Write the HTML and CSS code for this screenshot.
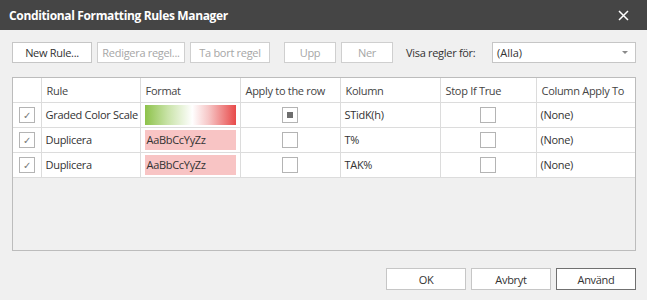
FILE: index.html
```html
<!DOCTYPE html>
<html lang="sv">
<head>
	<meta charset="UTF-8">
	<meta name="viewport" content="width=device-width,initial-scale=1.0">
	<title>Conditional Formatting Rules Manager</title>
	<link rel="stylesheet" href="styles.css">
</head>
<body>
	<div class="dialog">
		<div class="title-bar">
			<span class="title">Conditional Formatting Rules Manager</span>
			<span class="close">
				<svg width="11" height="11" viewBox="0 0 11 11"><path d="M1 1L10 10M10 1L1 10" stroke="#fff" stroke-width="1.5"/></svg>
			</span>
		</div>
		<div class="content">
			<div class="toolbar">
				<button type="button" class="btn btn-new">New Rule...</button>
				<button type="button" class="btn btn-edit" disabled>Redigera regel...</button>
				<button type="button" class="btn btn-delete" disabled>Ta bort regel</button>
				<button type="button" class="btn btn-up" disabled>Upp</button>
				<button type="button" class="btn btn-down" disabled>Ner</button>
				<label class="show-label">Visa regler för:</label>
				<div class="combo">
					<span>(Alla)</span>
					<span class="arrow"></span>
				</div>
			</div>
			<!-- regellista -->
			<div class="grid">
				<table>
					<colgroup>
						<col class="col-check">
						<col class="col-rule">
						<col class="col-format">
						<col class="col-row">
						<col class="col-kolumn">
						<col class="col-stop">
						<col>
					</colgroup>
					<thead>
						<tr>
							<th></th>
							<th>Rule</th>
							<th>Format</th>
							<th>Apply to the row</th>
							<th>Kolumn</th>
							<th>Stop If True</th>
							<th>Column Apply To</th>
						</tr>
					</thead>
					<tbody>
						<tr>
							<td class="center"><span class="check checked">&#10003;</span></td>
							<td>Graded Color Scale</td>
							<td><div class="swatch gradient"></div></td>
							<td class="center"><span class="check partial"><i></i></span></td>
							<td>STidK(h)</td>
							<td class="center"><span class="check"></span></td>
							<td>(None)</td>
						</tr>
						<tr>
							<td class="center"><span class="check checked">&#10003;</span></td>
							<td>Duplicera</td>
							<td><div class="swatch pink">AaBbCcYyZz</div></td>
							<td class="center"><span class="check"></span></td>
							<td>T%</td>
							<td class="center"><span class="check"></span></td>
							<td>(None)</td>
						</tr>
						<tr>
							<td class="center"><span class="check checked">&#10003;</span></td>
							<td>Duplicera</td>
							<td><div class="swatch pink">AaBbCcYyZz</div></td>
							<td class="center"><span class="check"></span></td>
							<td>TAK%</td>
							<td class="center"><span class="check"></span></td>
							<td>(None)</td>
						</tr>
					</tbody>
				</table>
			</div>
			<div class="footer">
				<button type="button" class="btn btn-foot">OK</button>
				<button type="button" class="btn btn-foot">Avbryt</button>
				<button type="button" class="btn btn-foot btn-default">Använd</button>
			</div>
		</div>
	</div>
</body>
</html>
```

FILE: styles.css
```css
body{
	margin: 0;
	background-color: #f0f0f0;
	font-family: "Open Sans", "Noto Sans", sans-serif;
	font-size: 11px;
	color: #333;
}
.dialog{
	width: 647px;
	height: 300px;
}
.title-bar{
	height: 30px;
	background-color: #454545;
	color: #fff;
	display: flex;
	align-items: center;
	justify-content: space-between;
	padding: 0 18px 0 9px;
}
.title{
	font-weight: bold;
	font-size: 12px;
	letter-spacing: -0.35px;
}
.close{
	display: flex;
}
.content{
	padding: 12px 11px 0 12px;
}
.toolbar{
	display: flex;
	align-items: center;
	height: 21px;
}
.btn{
	height: 21px;
	padding: 0;
	border: 1px solid #c6c6c6;
	background-color: #fff;
	color: #333;
	font-family: inherit;
	font-size: 11px;
	letter-spacing: -0.3px;
}
.btn:disabled{
	color: #a6a6a6;
	border-color: #cfcfcf;
}
.btn-new{ width: 80px; }
.btn-edit{ width: 88px; margin-left: 5px; }
.btn-delete{ width: 80px; margin-left: 5px; }
.btn-up{ width: 52px; margin-left: 14px; }
.btn-down{ width: 52px; margin-left: 5px; }
.show-label{
	margin-left: 13px;
	width: 86px;
	letter-spacing: -0.3px;
}
.combo{
	flex: 1;
	height: 19px;
	border: 1px solid #c6c6c6;
	background-color: #fff;
	display: flex;
	align-items: center;
	justify-content: space-between;
	padding: 0 7px 0 4px;
}
.arrow{
	width: 0;
	height: 0;
	border-left: 3px solid transparent;
	border-right: 3px solid transparent;
	border-top: 3px solid #8a8a8a;
}
.grid{
	margin-top: 14px;
	height: 172px;
	border: 1px solid #bcbcbc;
	background-color: #f0f0f0;
}
table{
	border-collapse: collapse;
	width: 100%;
	table-layout: fixed;
}
.col-check{ width: 28px; }
.col-rule{ width: 99px; }
.col-format{ width: 100px; }
.col-row{ width: 100px; }
.col-kolumn{ width: 100px; }
.col-stop{ width: 96px; }
th, td{
	box-sizing: border-box;
	height: 25px;
	padding: 0 0 0 4px;
	border-right: 1px solid #dcdcdc;
	border-bottom: 1px solid #dcdcdc;
	background-color: #fff;
	text-align: left;
	font-weight: normal;
	white-space: nowrap;
	overflow: hidden;
	letter-spacing: -0.3px;
}
th:last-child, td:last-child{
	border-right: none;
}
th{
	height: 24px;
	padding-left: 5px;
	padding-top: 1px;
	color: #444;
}
td{
	color: #333;
}
.center{
	text-align: center;
	padding: 0;
}
.check{
	display: inline-block;
	width: 14px;
	height: 14px;
	border: 1px solid #b4b4b4;
	background-color: #fff;
	vertical-align: middle;
	line-height: 14px;
	font-size: 10px;
	color: #777;
	text-align: center;
	position: relative;
	letter-spacing: 0;
}
.check.partial i{
	position: absolute;
	left: 4px;
	top: 4px;
	width: 6px;
	height: 6px;
	background-color: #6e6e6e;
}
td .swatch{
	height: 20px;
	margin-right: 4px;
	line-height: 20px;
	padding-left: 2px;
}
.gradient{
	background: linear-gradient(to right, #8dc24a 0%, #c9e3a8 25%, #ffffff 52%, #f6c6c6 70%, #e84a4a 100%);
}
.pink{
	background-color: #f8c4c4;
	color: #333;
}
.footer{
	display: flex;
	justify-content: flex-end;
	margin-top: 17px;
}
.btn-foot{
	width: 80px;
	height: 22px;
	margin-left: 5px;
}
.btn-default{
	border-color: #707070;
}
```
